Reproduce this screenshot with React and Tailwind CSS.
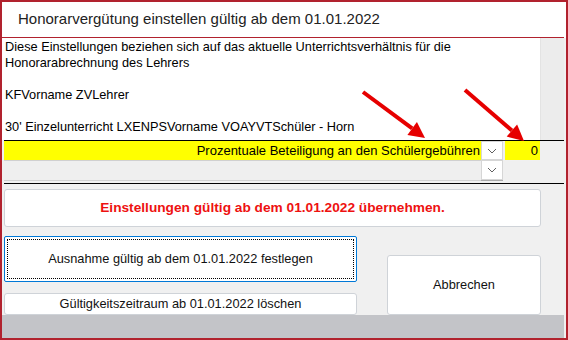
import React from 'react';

const Chevron = () => (
  <svg width="10" height="6" viewBox="0 0 10 6" className="text-[#606060]">
    <polyline points="1,1 5,5 9,1" fill="none" stroke="currentColor" strokeWidth="1" />
  </svg>
);

const DropBox = () => (
  <div className="w-[22px] h-full bg-white border border-[#d6d6d6] flex items-center justify-center">
    <Chevron />
  </div>
);

const Arrow = ({ x1, y1, x2, y2 }) => {
  const ang = Math.atan2(y2 - y1, x2 - x1);
  const len = 16;
  const w = 8;
  const bx = x2 - Math.cos(ang) * len;
  const by = y2 - Math.sin(ang) * len;
  const px = -Math.sin(ang) * w;
  const py = Math.cos(ang) * w;
  return (
    <g>
      <line x1={x1} y1={y1} x2={bx} y2={by} stroke="#e60000" strokeWidth="4" />
      <polygon points={`${x2},${y2} ${bx + px},${by + py} ${bx - px},${by - py}`} fill="#e60000" />
    </g>
  );
};

export default function App() {
  return (
    <div
      className="relative w-[568px] h-[340px] border-2 border-[#b1222e] bg-white flex flex-col overflow-hidden"
      style={{ fontFamily: '"Liberation Sans", Arial, sans-serif' }}
    >
      {/* Title */}
      <div className="h-[36px] shrink-0 flex items-center pl-[16px] mr-[2px] border-b border-[#b1222e] text-[15px] text-[#222]">
        Honorarvergütung einstellen gültig ab dem 01.01.2022
      </div>

      {/* Body */}
      <div className="flex-1 flex flex-col bg-[#f0f0f0]">
        <div className="h-[102px] shrink-0 flex">
          <div className="w-[539px] bg-white border-r border-[#e3e3e3] pl-[3px] pt-[1px] text-[12.75px] leading-[16px] text-black">
            <div>Diese Einstellungen beziehen sich auf das aktuelle Unterrichtsverhältnis für die</div>
            <div>Honorarabrechnung des Lehrers</div>
            <div>&nbsp;</div>
            <div>KFVorname ZVLehrer</div>
            <div>&nbsp;</div>
            <div>30' Einzelunterricht LXENPSVorname VOAYVTSchüler - Horn</div>
          </div>
          <div className="flex-1 bg-[#ececec] mr-[2px]" />
        </div>

        <div className="h-px ml-[2px] mr-[2px] bg-black shrink-0" />

        <div className="h-[19px] shrink-0 flex ml-[2px] text-[13px]">
          <div className="w-[477px] bg-[#ffff00] flex items-center justify-end pr-[1px] text-black">
            Prozentuale Beteiligung an den Schülergebühren
          </div>
          <DropBox />
          <div className="w-[35px] ml-[2px] bg-[#ffff00] flex items-center justify-end pr-[2px] text-black">0</div>
        </div>

        <div className="h-[21px] shrink-0 flex ml-[2px]">
          <div className="w-[477px] border-t border-b border-[#d0d0d0] bg-[#efefef]" />
          <div className="h-[21px] border-b border-[#a8a8a8]">
            <DropBox />
          </div>
        </div>

        <div className="h-px ml-[2px] mr-[2px] mt-[2px] bg-black shrink-0" />

        <div className="mt-[5px] ml-[2px] w-[537px] h-[38px] shrink-0 bg-white border border-[#cfd3d8] rounded-[3px] flex items-center justify-center text-[13.7px] font-bold text-[#ee1111]">
          Einstellungen gültig ab dem 01.01.2022 übernehmen.
        </div>

        <div className="mt-[9px] ml-[2px] h-[79px] shrink-0 flex text-[12.8px] text-[#111]">
          <div className="w-[353px] flex flex-col">
            <div className="h-[46px] bg-white border border-[#0078d7] rounded-[2px] p-[2px]">
              <div className="h-full border border-dotted border-black flex items-center justify-center">
                Ausnahme gültig ab dem 01.01.2022 festlegen
              </div>
            </div>
            <div className="mt-[11px] h-[22px] bg-white border border-[#cfd3d8] rounded-[3px] flex items-center justify-center">
              Gültigkeitszeitraum ab 01.01.2022 löschen
            </div>
          </div>
          <div className="ml-[30px] mt-[19px] w-[154px] h-[60px] bg-white border border-[#cfd3d8] rounded-[3px] flex items-center justify-center">
            Abbrechen
          </div>
        </div>

        <div className="flex-1 bg-[#c3c4c8] mr-[2px]" />
      </div>

      {/* Annotation arrows */}
      <svg className="absolute left-0 top-0 pointer-events-none" width="568" height="340">
        <Arrow x1={361} y1={90} x2={423} y2={136} />
        <Arrow x1={463} y1={88} x2={522} y2={139} />
      </svg>
    </div>
  );
}
